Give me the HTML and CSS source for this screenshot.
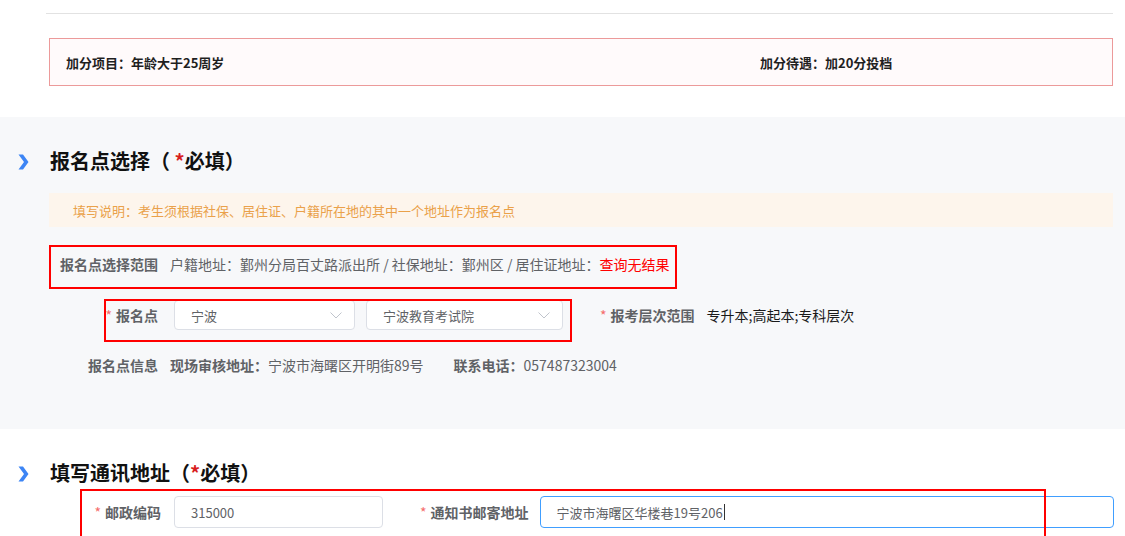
FILE: index.html
```html
<!DOCTYPE html>
<html lang="zh-CN">
<head>
<meta charset="utf-8">
<title>报名</title>
<link rel="stylesheet" href="styles.css">
</head>
<body>
<div class="divider"></div>
<div class="bonus">
  <div class="bonus-item bonus-left">加分项目：年龄大于25周岁</div>
  <div class="bonus-item">加分待遇：加20分投档</div>
</div>

<section class="gray-section">
  <h2 class="sec-title">
    <svg class="chev" width="11" height="16" viewBox="0 0 11 16"><path d="M0.5 0.5 L5 0.5 L10.5 8 L5 15.5 L0.5 15.5 L6 8 Z" fill="#3d85f5"/></svg>
    <span>报名点选择（ <em class="req">*</em>必填）</span>
  </h2>
  <div class="note">填写说明：考生须根据社保、居住证、户籍所在地的其中一个地址作为报名点</div>

  <div class="row row-range">
    <div class="label">报名点选择范围</div>
    <div class="value">户籍地址：鄞州分局百丈路派出所 / 社保地址：鄞州区 / 居住证地址：<span class="danger">查询无结果</span></div>
  </div>

  <div class="row row-point">
    <div class="label"><em class="req">*</em>报名点</div>
    <div class="select sel-city"><span>宁波</span><svg class="arrow" width="12" height="7" viewBox="0 0 12 7"><path d="M0.5 0.5 L6 6 L11.5 0.5" fill="none" stroke="#c0c4cc" stroke-width="1"/></svg></div>
    <div class="select sel-org"><span>宁波教育考试院</span><svg class="arrow" width="12" height="7" viewBox="0 0 12 7"><path d="M0.5 0.5 L6 6 L11.5 0.5" fill="none" stroke="#c0c4cc" stroke-width="1"/></svg></div>
    <div class="label label-level"><em class="req">*</em>报考层次范围</div>
    <div class="level-value">专升本;高起本;专科层次</div>
  </div>

  <div class="row row-info">
    <div class="label">报名点信息</div>
    <div class="value"><b>现场审核地址：</b>宁波市海曙区开明街89号</div>
    <div class="value phone"><b>联系电话：</b>057487323004</div>
  </div>
</section>

<section class="white-section">
  <h2 class="sec-title">
    <svg class="chev" width="11" height="16" viewBox="0 0 11 16"><path d="M0.5 0.5 L5 0.5 L10.5 8 L5 15.5 L0.5 15.5 L6 8 Z" fill="#3d85f5"/></svg>
    <span>填写通讯地址（<em class="req">*</em>必填）</span>
  </h2>
  <div class="row row-addr">
    <div class="label label-zip"><em class="req">*</em>邮政编码</div>
    <div class="input input-zip">315000</div>
    <div class="label label-mail"><em class="req">*</em>通知书邮寄地址</div>
    <div class="input input-mail focused">宁波市海曙区华楼巷19号206<span class="caret"></span></div>
  </div>
</section>

<div class="mark mark-1"></div>
<div class="mark mark-2"></div>
<div class="mark mark-3"></div>
</body>
</html>
```

FILE: styles.css
```css
* { box-sizing: border-box; }
html, body { margin: 0; padding: 0; background: #fff; }
body {
  font-family: "Noto Sans CJK SC", "Noto Sans", sans-serif;
  color: #606266;
  font-size: 14px;
  width: 1125px;
  height: 536px;
  overflow: hidden;
  position: relative;
}
em { font-style: normal; }

.divider {
  margin: 13px 12px 0 46px;
  height: 1px;
  background: #e2e2e2;
}

.bonus {
  margin: 24px 12px 0 49px;
  height: 48px;
  border: 1px solid #ec9a9a;
  background: #fffafb;
  display: flex;
  align-items: center;
  padding-left: 16px;
  font-size: 13px;
  font-weight: 700;
  color: #1f1f1f;
}
.bonus-left { width: 694px; }

.gray-section {
  margin-top: 31px;
  background: #f7f8fa;
  padding: 30px 12px 44px 0;
  height: 312px;
}

.sec-title {
  margin: 0;
  height: 28px;
  display: flex;
  align-items: center;
  font-size: 20px;
  font-weight: 700;
  color: #111;
  line-height: 28px;
}
.chev { margin: 2px 21px 0 18px; flex: none; }
.req { color: #e02020; font-weight: 400; }
.sec-title .req { color: #d81e1e; font-weight: 700; }

.note {
  margin: 18px 0 0 49px;
  height: 34px;
  background: #fdf5ec;
  color: #eaa14a;
  font-size: 13px;
  display: flex;
  align-items: center;
  padding-left: 24px;
}

.row {
  display: flex;
  align-items: center;
  height: 40px;
}
.label {
  font-weight: 700;
  color: #606266;
  text-align: right;
  flex: none;
}
.label .req { color: #f56c6c; margin-right: 4px; font-weight: 400; }
.row-range { margin-top: 17px; padding-left: 49px; }
.row-range .label, .row-info .label { width: 109px; margin-right: 12px; }
.value { color: #606266; }
.value b { font-weight: 700; }
.danger { color: #ff0000; }

.row-point { margin-top: 11px; padding-left: 49px; }
.row-point > .label:first-child { width: 109px; margin-right: 16px; }
.select {
  height: 30px;
  background: #fff;
  border: 1px solid #dcdfe6;
  border-radius: 4px;
  display: flex;
  align-items: center;
  justify-content: space-between;
  padding: 0 12px 0 16px;
  font-size: 13px;
  color: #606266;
  flex: none;
}
.sel-city { width: 181px; margin-right: 11px; }
.sel-org { width: 197px; }
.label-level { margin-left: 37px; }
.level-value { margin-left: 12px; color: #1a1a1a; }

.row-info { margin-top: 10px; padding-left: 49px; }
.phone { margin-left: 30px; }

.white-section { padding-top: 30px; }
.row-addr { margin-top: 5px; padding-left: 49px; height: 40px; }
.label-zip { width: 112px; margin-right: 13px; }
.input {
  height: 32px;
  border: 1px solid #dcdfe6;
  border-radius: 4px;
  background: #fff;
  display: flex;
  align-items: center;
  padding-left: 16px;
  font-size: 13px;
  color: #606266;
  flex: none;
}
.input-zip { width: 209px; }
.label-mail { margin-left: 37px; margin-right: 11px; }
.input-mail { width: 574px; }
.focused { border-color: #409eff; }
.caret { display: inline-block; width: 1px; height: 16px; background: #333; margin-left: 1px; }

.mark {
  position: absolute;
  border: 2px solid #ff0000;
  pointer-events: none;
}
.mark-1 { left: 49px; top: 245px; width: 628px; height: 44px; }
.mark-2 { left: 104px; top: 299px; width: 468px; height: 43px; }
.mark-3 { left: 80px; top: 489px; width: 966px; height: 50px; }
```
